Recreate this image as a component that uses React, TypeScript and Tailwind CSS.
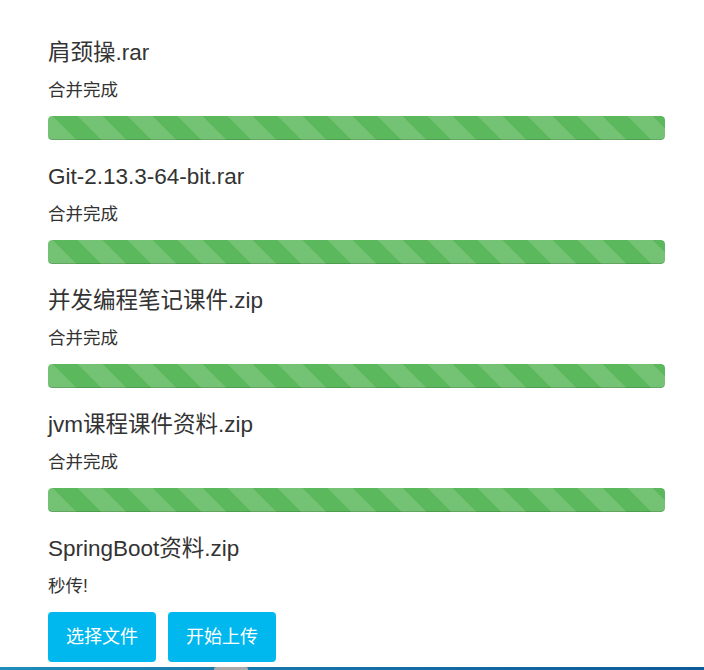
import React from 'react';

interface FileItem {
  name: string;
  status: string;
  done: boolean;
}

const files: FileItem[] = [
  { name: '肩颈操.rar', status: '合并完成', done: true },
  { name: 'Git-2.13.3-64-bit.rar', status: '合并完成', done: true },
  { name: '并发编程笔记课件.zip', status: '合并完成', done: true },
  { name: 'jvm课程课件资料.zip', status: '合并完成', done: true },
  { name: 'SpringBoot资料.zip', status: '秒传!', done: false },
];

const font = { fontFamily: '"Liberation Sans", "Noto Sans CJK SC", sans-serif' };

const App: React.FC = () => {
  return (
    <div className="h-[670px] w-[704px] bg-white flex flex-col text-[#333]" style={font}>
      {/* File list */}
      <div className="flex-1 pl-[48px] pr-[39px] pt-[38px]">
        {files.map((f) => (
          <div key={f.name} className={f.done ? 'mb-[22px]' : ''}>
            <div className="text-[22.5px] leading-[30px]">{f.name}</div>
            <div className="mt-[9px] text-[17.5px] leading-[26px]">{f.status}</div>
            {f.done && (
              <div className="mt-[13px] h-[24px] rounded-[4px] bg-[#f5f5f5] overflow-hidden">
                <div className="h-full w-full rounded-[4px] bg-[#5cb85c] shadow-[inset_0_-1px_0_rgba(0,0,0,0.15)] bg-[linear-gradient(45deg,rgba(255,255,255,.15)_25%,transparent_25%,transparent_50%,rgba(255,255,255,.15)_50%,rgba(255,255,255,.15)_75%,transparent_75%,transparent)] bg-[length:50px_50px] bg-[position:-20px_0]" />
              </div>
            )}
          </div>
        ))}

        {/* Actions */}
        <div className="mt-[13px] flex gap-[12px]">
          <button className="h-[50px] w-[108px] rounded-[4px] bg-[#00b7ee] text-white text-[18px]">选择文件</button>
          <button className="h-[50px] w-[108px] rounded-[4px] bg-[#00b7ee] text-white text-[18px]">开始上传</button>
        </div>
      </div>

      {/* Bottom edge */}
      <div className="relative h-[3px] bg-[linear-gradient(90deg,#1f8dba,#1470a8_50%,#0d5a98)]">
        <div className="absolute left-[214px] top-0 h-[3px] w-[34px] rounded-t-[2px] bg-[#a9a9a9]" />
      </div>
    </div>
  );
};

export default App;
